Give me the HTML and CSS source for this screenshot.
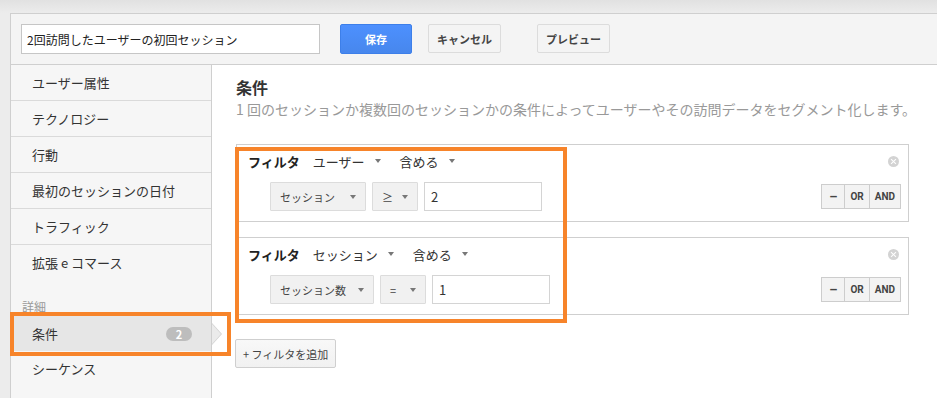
FILE: index.html
```html
<!DOCTYPE html>
<html lang="ja">

<head>
    <meta charset="UTF-8">
    <meta name="viewport" content="width=device-width, initial-scale=1.0">
    <title>セグメント エディタ</title>
    <link rel="stylesheet" href="styles.css">
</head>

<body>
    <div class="page">
        <div class="panel">
            <div class="toolbar">
                <input class="name-input" type="text" value="2回訪問したユーザーの初回セッション">
                <button class="btn btn-save">保存</button>
                <button class="btn btn-cancel">キャンセル</button>
                <button class="btn btn-preview">プレビュー</button>
            </div>

            <div class="body">
                <div class="sidebar">
                    <div class="nav-group">
                        <div class="nav-item">ユーザー属性</div>
                        <div class="nav-item">テクノロジー</div>
                        <div class="nav-item">行動</div>
                        <div class="nav-item">最初のセッションの日付</div>
                        <div class="nav-item">トラフィック</div>
                        <div class="nav-item">拡張 e コマース</div>
                    </div>
                    <div class="nav-label">詳細</div>
                    <div class="nav-group nav-group-plain">
                        <div class="nav-item selected">条件 <span class="badge">2</span></div>
                        <div class="nav-item">シーケンス</div>
                    </div>
                </div>

                <div class="content">
                    <h2 class="title">条件</h2>
                    <p class="desc">1 回のセッションか複数回のセッションかの条件によってユーザーやその訪問データをセグメント化します。</p>

                    <div class="filters">
                        <div class="filter">
                            <div class="filter_head">
                                <span class="filter_label">フィルタ</span>
                                <span class="drop">ユーザー<i class="caret"></i></span>
                                <span class="drop">含める<i class="caret"></i></span>
                                <span class="remove"></span>
                            </div>
                            <div class="filter_row">
                                <span class="select">セッション<i class="caret"></i></span>
                                <span class="select select-op">≥<i class="caret"></i></span>
                                <input class="value" type="text" value="2">
                                <div class="logic">
                                    <button>–</button>
                                    <button>OR</button>
                                    <button>AND</button>
                                </div>
                            </div>
                        </div>

                        <div class="filter">
                            <div class="filter_head">
                                <span class="filter_label">フィルタ</span>
                                <span class="drop">セッション<i class="caret"></i></span>
                                <span class="drop">含める<i class="caret"></i></span>
                                <span class="remove"></span>
                            </div>
                            <div class="filter_row">
                                <span class="select select-tight">セッション数<i class="caret"></i></span>
                                <span class="select select-op">=<i class="caret"></i></span>
                                <input class="value" type="text" value="1">
                                <div class="logic">
                                    <button>–</button>
                                    <button>OR</button>
                                    <button>AND</button>
                                </div>
                            </div>
                        </div>
                    </div>

                    <button class="add-filter">+ フィルタを追加</button>
                </div>
            </div>
        </div>

        <!-- annotation boxes -->
        <div class="mark mark-filters"></div>
        <div class="mark mark-nav"></div>
    </div>
</body>

</html>
```

FILE: styles.css
```css
html,
body {
    margin: 0;
    padding: 0;
}

:root {
    --mark-color: #f7842a;
    --line: #cfcfcf;
    --text: #333;
}

body {
    font-family: "Noto Sans CJK JP", "Liberation Sans", sans-serif;
    color: var(--text);
    background: linear-gradient(#e1e1e1, #ececec 13px, #ececec);
}

.page {
    position: relative;
    height: 100vh;
    box-sizing: border-box;
    padding: 13px 0 0 10px;
    overflow: hidden;
}

.panel {
    height: 100%;
    display: flex;
    flex-direction: column;
    background: #fff;
    border-top: 1px solid var(--line);
    border-left: 1px solid var(--line);
}

/* top bar */
.toolbar {
    height: 51px;
    flex-shrink: 0;
    display: flex;
    align-items: flex-start;
    padding: 10px 0 0 10px;
    box-sizing: border-box;
    background: #f4f4f4;
    border-bottom: 1px solid var(--line);
}

.name-input {
    width: 299px;
    height: 30px;
    box-sizing: border-box;
    border: 1px solid #c6c6c6;
    padding: 0 5px;
    font-family: inherit;
    font-size: 12px;
    color: #222;
    background: #fff;
    outline: none;
}

.btn {
    height: 29px;
    box-sizing: border-box;
    padding: 0;
    border-radius: 2px;
    font-family: inherit;
    font-size: 11px;
    font-weight: bold;
    cursor: pointer;
}

.btn-save {
    width: 72px;
    height: 30px;
    margin-left: 20px;
    color: #fff;
    background: linear-gradient(#4d90fe, #4787ed);
    border: 1px solid #3d7fe9;
}

.btn-cancel,
.btn-preview {
    width: 73px;
    color: #444;
    background: #f4f4f4;
    border: 1px solid #dcdcdc;
}

.btn-cancel {
    margin-left: 16px;
}

.btn-preview {
    margin-left: 36px;
}

/* main area */
.body {
    flex: 1;
    display: flex;
    min-height: 0;
}

.sidebar {
    width: 200px;
    flex-shrink: 0;
    background: #f6f6f6;
    border-right: 1px solid var(--line);
}

.nav-item {
    position: relative;
    height: 35px;
    display: flex;
    align-items: center;
    justify-content: space-between;
    padding: 0 19px 0 21px;
    font-size: 13px;
    border-bottom: 1px solid #dadada;
}

.nav-group .nav-item:last-child,
.nav-group-plain .nav-item {
    border-bottom: none;
}

.nav-label {
    padding: 17px 0 0 11px;
    line-height: 19px;
    font-size: 12px;
    color: #999;
}

.nav-item.selected {
    background: #e6e6e6;
}

.nav-item.selected::before,
.nav-item.selected::after {
    content: "";
    position: absolute;
    top: 50%;
    border-style: solid;
    border-color: transparent;
}

.nav-item.selected::before {
    right: -11px;
    margin-top: -11px;
    border-width: 11px 0 11px 10px;
    border-left-color: #d2d2d2;
}

.nav-item.selected::after {
    right: -10px;
    margin-top: -10px;
    border-width: 10px 0 10px 9px;
    border-left-color: #ebebeb;
}

.badge {
    width: 26px;
    height: 14px;
    line-height: 14px;
    border-radius: 7px;
    background: #bdbdbd;
    color: #fff;
    font-size: 11px;
    font-weight: bold;
    text-align: center;
}

.content {
    flex: 1;
    min-width: 0;
    padding: 12px 28px 0 24px;
}

.title {
    margin: 0;
    font-size: 16px;
    line-height: 20px;
    font-weight: bold;
    color: #333;
}

.desc {
    margin: 2px 0 25px;
    font-size: 14px;
    line-height: 20px;
    color: #999;
    white-space: nowrap;
}

.filters {
    display: flex;
    flex-direction: column;
    gap: 15px;
}

.filter {
    border: 1px solid var(--line);
    padding: 0 7px 10px 11px;
}

.filter_head {
    height: 32px;
    display: flex;
    align-items: center;
    font-size: 13px;
    color: #333;
}

.filter_label {
    font-weight: bold;
    color: #222;
    margin-right: 13px;
}

.drop {
    display: flex;
    align-items: center;
    margin-right: 19px;
}

.drop .caret {
    margin-left: 10px;
}

.caret {
    width: 0;
    height: 0;
    border-left: 3px solid transparent;
    border-right: 3px solid transparent;
    border-top: 4px solid #777;
}

.remove {
    position: relative;
    width: 11px;
    height: 11px;
    margin: 0 2px 0 auto;
    border-radius: 50%;
    background: #d3d3d3;
}

.remove::before,
.remove::after {
    content: "";
    position: absolute;
    left: 5px;
    top: 2px;
    width: 1px;
    height: 7px;
    background: #fff;
    transform: rotate(45deg);
}

.remove::after {
    transform: rotate(-45deg);
}

.filter_row {
    display: flex;
    align-items: center;
    gap: 6px;
    margin-top: 5px;
    padding-left: 22px;
}

.select {
    height: 29px;
    box-sizing: border-box;
    display: flex;
    align-items: center;
    justify-content: space-between;
    gap: 15px;
    padding: 0 9px;
    background: #f1f1f1;
    border: 1px solid #dcdcdc;
    border-radius: 1px;
    font-size: 11px;
    color: #444;
}

.select-tight {
    gap: 12px;
}

.select-op {
    width: 46px;
    gap: 0;
}

.value {
    width: 118px;
    height: 29px;
    box-sizing: border-box;
    border: 1px solid #d4d4d4;
    padding: 0 6px;
    font-family: inherit;
    font-size: 13px;
    color: #333;
    outline: none;
}

.logic {
    display: flex;
    margin-left: auto;
}

.logic button {
    height: 25px;
    min-width: 24px;
    padding: 0 5px;
    box-sizing: border-box;
    background: #f3f3f3;
    border: 1px solid #cdcdcd;
    margin-left: -1px;
    font-family: "Roboto", "Liberation Sans", sans-serif;
    font-size: 10px;
    font-weight: bold;
    color: #444;
    cursor: pointer;
}

.logic button:first-child {
    font-size: 13px;
}

.add-filter {
    margin: 24px 0 0 -1px;
    height: 29px;
    padding: 0 7px;
    background: linear-gradient(#f8f8f8, #f1f1f1);
    border: 1px solid #cfcfcf;
    border-radius: 2px;
    font-family: inherit;
    font-size: 11px;
    color: #444;
    cursor: pointer;
}

/* orange highlight overlays */
.mark {
    position: absolute;
    box-sizing: border-box;
    border: 4px solid var(--mark-color);
    pointer-events: none;
}

.mark-filters {
    left: 235px;
    top: 147px;
    width: 332px;
    height: 176px;
}

.mark-nav {
    left: 10px;
    top: 312px;
    width: 221px;
    height: 44px;
}
```
